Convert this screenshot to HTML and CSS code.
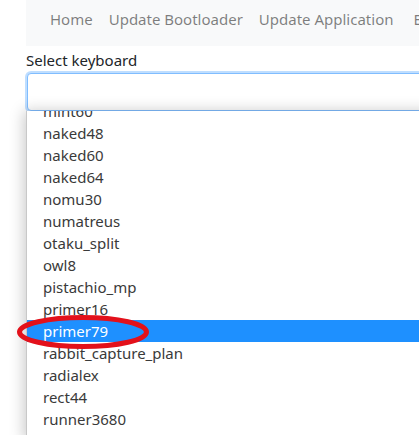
FILE: index.html
```html
<!DOCTYPE html>
<html>
<head>
<meta charset="utf-8">
<link rel="stylesheet" href="styles.css">
</head>
<body>
<div class="page">
  <nav class="navbar">
    <a class="nav-link">Home</a>
    <a class="nav-link">Update Bootloader</a>
    <a class="nav-link">Update Application</a>
    <a class="nav-link">Eject</a>
  </nav>
  <div class="form">
    <label class="label">Select keyboard</label>
    <div class="select-wrap">
      <div class="input"></div>
      <div class="dropdown">
        <ul class="options">
          <li>mint60</li>
          <li>naked48</li>
          <li>naked60</li>
          <li>naked64</li>
          <li>nomu30</li>
          <li>numatreus</li>
          <li>otaku_split</li>
          <li>owl8</li>
          <li>pistachio_mp</li>
          <li>primer16</li>
          <li class="selected">primer79</li>
          <li>rabbit_capture_plan</li>
          <li>radialex</li>
          <li>rect44</li>
          <li>runner3680</li>
          <li>runner3680_5x6</li>
        </ul>
      </div>
    </div>
  </div>
</div>
<svg class="circle" width="140" height="40" viewBox="0 0 140 40">
  <ellipse cx="68" cy="19" rx="63.5" ry="14.5" fill="none" stroke="#e3111b" stroke-width="5"/>
</svg>
</body>
</html>
```

FILE: styles.css
```css
html, body {
  margin: 0;
  padding: 0;
  background: #fff;
  overflow: hidden;
}
body {
  width: 419px;
  height: 435px;
  position: relative;
  font-family: "Noto Sans", "Open Sans", sans-serif;
}
.page {
  padding-left: 26px;
}
.navbar {
  background: #f8f9fa;
  height: 46px;
  display: flex;
  align-items: center;
  padding-left: 16px;
  white-space: nowrap;
  overflow: hidden;
  width: 500px;
}
.nav-link {
  color: rgba(0, 0, 0, 0.5);
  font-size: 15px;
  padding: 0 8px;
  line-height: 24px;
  margin-top: -8px;
}
.nav-link:last-child {
  padding-left: 12px;
}
.form {
  padding-top: 5px;
}
.label {
  display: block;
  font-size: 15px;
  color: #212529;
  line-height: 18px;
  margin-bottom: 4px;
}
.select-wrap {
  width: 520px;
}
.input {
  height: 36px;
  border: 1px solid #80bdff;
  border-radius: 4px;
  box-shadow: 0 0 0 2px rgba(0, 123, 255, 0.25);
  background: #fff;
  margin-left: 1px;
}
.dropdown {
  height: 330px;
  overflow: hidden;
  background: #fff;
  border-left: 1px solid #c8c8c8;
  box-shadow: -2px 0 14px rgba(0, 0, 0, 0.22);
  position: relative;
}
.options {
  list-style: none;
  margin: -11px 0 0 0;
  padding: 0;
}
.options li {
  height: 22px;
  line-height: 22px;
  padding-left: 16px;
  font-size: 15px;
  color: #3a3a3a;
}
.options li.selected {
  background: #1e90ff;
  color: #fff;
}
.circle {
  position: absolute;
  left: 15px;
  top: 313px;
}
```
